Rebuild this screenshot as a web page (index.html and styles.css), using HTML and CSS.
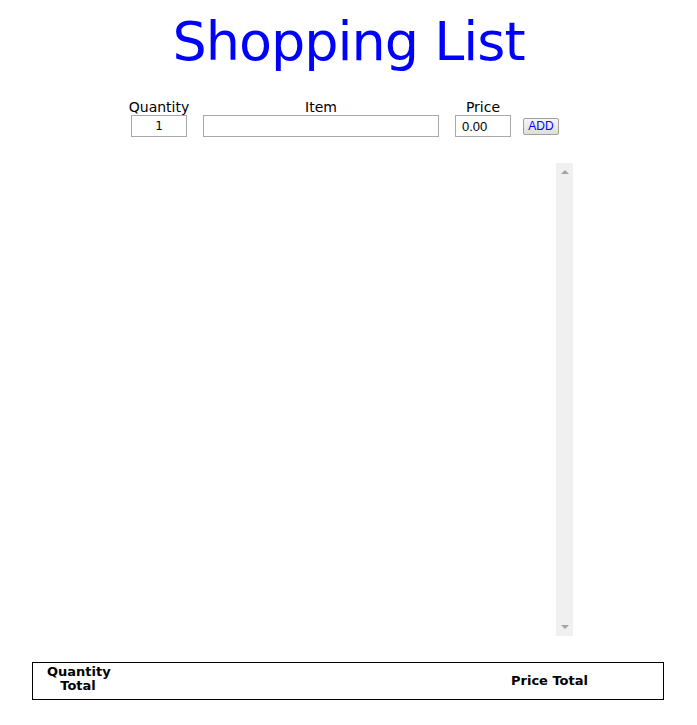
FILE: index.html
```html
<!DOCTYPE html>
<html lang="en">
<head>
<meta charset="utf-8">
<title>Shopping List</title>
<link rel="stylesheet" href="styles.css">
</head>
<body>
<h1 class="title">Shopping List</h1>
<div class="form-row">
  <div class="field field-small">
    <label class="field-label" for="qty">Quantity</label>
    <input class="input input-qty" id="qty" type="text" value="1">
  </div>
  <div class="field field-wide">
    <label class="field-label" for="item">Item</label>
    <input class="input input-item" id="item" type="text" value="">
  </div>
  <div class="field field-small">
    <label class="field-label" for="price">Price</label>
    <input class="input input-price" id="price" type="text" value="0.00">
  </div>
  <button class="add-btn" type="button">ADD</button>
</div>
<div class="list">
  <div class="list-content"></div>
  <div class="scrollbar">
    <span class="arrow arrow-up"></span>
    <span class="arrow arrow-down"></span>
  </div>
</div>
<div class="totals">
  <div class="total total-qty">Quantity<br>Total</div>
  <div class="total total-price">Price Total</div>
</div>
</body>
</html>
```
FILE: styles.css
```css
html, body {
  margin: 0;
  padding: 0;
  background: #ffffff;
}
body {
  font-family: "Comic Sans MS", "DejaVu Sans", sans-serif;
  color: #000;
  width: 697px;
}
.title {
  margin: 0;
  padding-top: 6px;
  height: 90px;
  text-align: center;
  font-size: 54px;
  font-weight: normal;
  color: #0000ff;
  line-height: 72px;
  letter-spacing: -1px;
  box-sizing: border-box;
}
.form-row {
  display: flex;
  justify-content: center;
  align-items: flex-end;
  gap: 16px;
  padding-right: 7px;
  height: 47px;
}
.field {
  display: flex;
  flex-direction: column;
  align-items: center;
}
.field-small {
  width: 56px;
}
.field-wide {
  width: 236px;
}
.field-label {
  font-size: 14px;
  line-height: 15px;
  margin-bottom: 0;
  white-space: nowrap;
}
.input {
  box-sizing: border-box;
  height: 22px;
  border: 1px solid #a9a9a9;
  padding: 0 5px;
  margin: 0;
  font-size: 13px;
  background: #fff;
  outline: none;
}
.input-qty {
  width: 56px;
  text-align: center;
  font-family: "Comic Sans MS", "DejaVu Sans", sans-serif;
  font-size: 12px;
}
.input-item {
  width: 236px;
}
.input-price {
  width: 56px;
  font-family: "Liberation Sans", Arial, sans-serif;
  font-size: 13px;
  padding-left: 6px;
}
.add-btn {
  box-sizing: border-box;
  width: 36px;
  height: 17px;
  margin: 0 0 2px -4px;
  padding: 0;
  border: 1px solid #a0a0a0;
  border-radius: 2px;
  background: linear-gradient(#f6f6f6, #dedede);
  color: #0000ff;
  font-family: "Liberation Sans", Arial, sans-serif;
  font-size: 12px;
  line-height: 15px;
}
.list {
  display: flex;
  width: 449px;
  height: 473px;
  margin: 26px auto 0 auto;
}
.list-content {
  flex: 1;
}
.scrollbar {
  width: 17px;
  background: #f0f0f0;
  display: flex;
  flex-direction: column;
  justify-content: space-between;
  align-items: center;
  padding: 7px 0;
  box-sizing: border-box;
}
.arrow {
  width: 0;
  height: 0;
  border-left: 4px solid transparent;
  border-right: 4px solid transparent;
}
.arrow-up {
  border-bottom: 4px solid #a3a3a3;
}
.arrow-down {
  border-top: 4px solid #a3a3a3;
}
.totals {
  display: flex;
  justify-content: space-between;
  align-items: center;
  box-sizing: border-box;
  width: 632px;
  height: 38px;
  margin: 26px 0 0 32px;
  border: 1px solid #000;
  padding: 0 75px 0 14px;
}
.total {
  font-weight: bold;
  font-size: 13px;
  line-height: 14px;
  text-align: center;
}
.total-qty {
  width: 62px;
  margin-top: -4px;
}
.total-price {
  width: 77px;
}
```
